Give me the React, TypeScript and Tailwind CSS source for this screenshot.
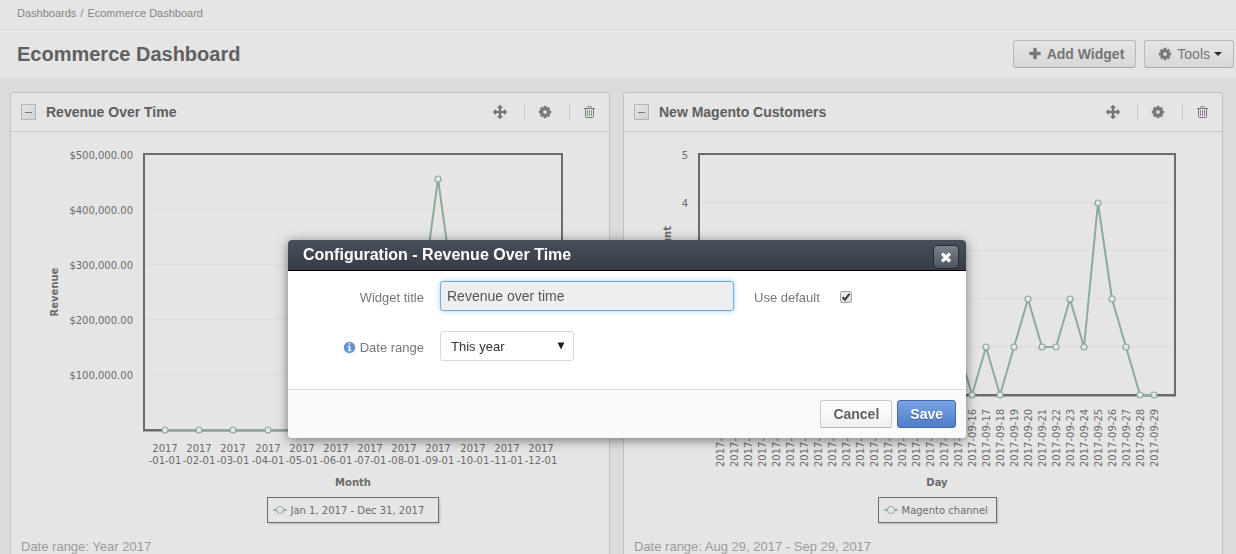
import React, { useState } from "react";

const ICONS = {
  plus: "M1600 736v192q0 40-28 68t-68 28h-416v416q0 40-28 68t-68 28h-192q-40 0-68-28t-28-68v-416h-416q-40 0-68-28t-28-68v-192q0-40 28-68t68-28h416v-416q0-40 28-68t68-28h192q40 0 68 28t28 68v416h416q40 0 68 28t28 68z",
  cog: "M1152 896q0-106-75-181t-181-75-181 75-75 181 75 181 181 75 181-75 75-181zm512-109v222q0 12-8 23t-20 13l-185 28q-19 54-39 91 35 50 107 138 10 12 10 25t-9 23q-27 37-99 108t-94 71q-12 0-26-9l-138-108q-44 23-91 38-16 136-29 186-7 28-36 28h-222q-14 0-24.5-8.5t-11.5-21.5l-28-184q-49-16-90-37l-141 107q-10 9-25 9-14 0-25-11-126-114-165-168-7-10-7-23 0-12 8-23 15-21 51-66.5t54-70.5q-27-50-41-99l-183-27q-13-2-21-12.5t-8-23.5v-222q0-12 8-23t19-13l186-28q14-46 39-92-40-57-107-138-10-12-10-24 0-10 9-23 26-36 98.5-107.5t94.5-71.5q13 0 26 10l138 107q44-23 91-38 16-136 29-186 7-28 36-28h222q14 0 24.5 8.5t11.5 21.5l28 184q49 16 90 37l142-107q9-9 24-9 13 0 25 10 129 119 165 170 7 8 7 22 0 12-8 23-15 21-51 66.5t-54 70.5q26 50 41 98l183 28q13 2 21 12.5t8 23.5z",
  move: "M1792 896q0 26-19 45l-256 256q-19 19-45 19t-45-19-19-45v-128h-384v384h128q26 0 45 19t19 45-19 45l-256 256q-19 19-45 19t-45-19l-256-256q-19-19-19-45t19-45 45-19h128v-384h-384v128q0 26-19 45t-45 19-45-19l-256-256q-19-19-19-45t19-45l256-256q19-19 45-19t45 19 19 45v128h384v-384h-128q-26 0-45-19t-19-45 19-45l256-256q19-19 45-19t45 19l256 256q19 19 19 45t-19 45-45 19h-128v384h384v-128q0-26 19-45t45-19 45 19l256 256q19 19 19 45z",
  times: "M1490 1322q0 40-28 68l-136 136q-28 28-68 28t-68-28l-294-294-294 294q-28 28-68 28t-68-28l-136-136q-28-28-28-68t28-68l294-294-294-294q-28-28-28-68t28-68l136-136q28-28 68-28t68 28l294 294 294-294q28-28 68-28t68 28l136 136q28 28 28 68t-28 68l-294 294 294 294q28 28 28 68z",
  info: "M1152 1376v-160q0-14-9-23t-23-9h-96v-512q0-14-9-23t-23-9h-320q-14 0-23 9t-9 23v160q0 14 9 23t23 9h96v320h-96q-14 0-23 9t-9 23v160q0 14 9 23t23 9h448q14 0 23-9t9-23zm-128-896v-160q0-14-9-23t-23-9h-192q-14 0-23 9t-9 23v160q0 14 9 23t23 9h192q14 0 23-9t9-23zm640 416q0 209-103 385.5t-279.5 279.5-385.5 103-385.5-103-279.5-279.5-103-385.5 103-385.5 279.5-279.5 385.5-103 385.5 103 279.5 279.5 103 385.5z",
};

function Icon({ name, className = "size-3.5" }: { name: keyof typeof ICONS; className?: string }) {
  return (
    <svg viewBox="0 0 1792 1792" className={className} fill="currentColor" stroke="currentColor" strokeWidth="50" aria-hidden="true" overflow="visible">
      <path d={ICONS[name]} />
    </svg>
  );
}

function TrashIcon({ bars }: { bars: string }) {
  return (
    <svg viewBox="0 0 14 14" className="size-3.5" fill="none" aria-hidden="true">
      <path d="M3.500 3.500v8q0 1 1 1h6q1 0 1-1V3.500" stroke="currentColor" />
      <path d="M2 3.500h11M5.500 3.200V2.500q0-1 1-1h2q1 0 1 1v.7" stroke="currentColor" />
      <path d="M5.500 5v6M7.500 5v6M9.500 5v6" stroke={bars} />
    </svg>
  );
}

type Tick = { at: number; label: string };
type Point = [number, number];

type ChartProps = {
  title: string;
  left: number;
  bottom: number;
  yTicks: Tick[];
  yTitle: string;
  yTitleX: number;
  points: Point[];
  xLabels: React.ReactNode;
  xTitle: string;
  legend: string;
  legendWidth: number;
};

function LineChart(p: ChartProps) {
  const right = 551;
  const mid = (p.left + right) / 2;
  const yMid = (22 + p.bottom) / 2;
  const legendX = Math.round(mid - p.legendWidth / 2) + 0.5;
  return (
    <svg viewBox="0 0 598 394" className="block h-auto w-full" role="img" aria-label={p.title} fontFamily='"DejaVu Sans", Verdana, sans-serif' fontSize="10" fill="#6b6b6b">
      {p.yTicks.map((t) => (
        <g key={t.label}>
          <line x1={p.left} x2={right} y1={t.at} y2={t.at} stroke="#dddddd" />
          <text x={p.left - 11} y={t.at + 4.5} textAnchor="end">{t.label}</text>
        </g>
      ))}
      <line x1={p.left - 1} x2={right + 1} y1={p.bottom + 1.5} y2={p.bottom + 1.5} stroke="#a8a8a8" />
      <rect x={p.left} y="22" width={right - p.left} height={p.bottom - 22} fill="none" stroke="#6b6b6b" strokeWidth="2" />
      <polyline points={p.points.map((q) => q.join(",")).join(" ")} fill="none" stroke="#8cab9a" strokeWidth="2" strokeLinejoin="round" />
      {p.points.map(([x, y]) => (
        <circle key={x} cx={x} cy={y} r="3" fill="#e5e5e5" stroke="#8cab9a" strokeWidth="1.2" />
      ))}
      {p.xLabels}
      <text transform={`translate(${p.yTitleX} ${yMid}) rotate(-90)`} textAnchor="middle" fontWeight="bold">{p.yTitle}</text>
      <text x={mid} y="354" textAnchor="middle" fontWeight="bold">{p.xTitle}</text>
      <rect x={legendX + 1} y="366.5" width={p.legendWidth} height="26" fill="#c9c9c9" />
      <rect x={legendX} y="365.5" width={p.legendWidth - 1} height="25" fill="#e5e5e5" stroke="#6b6b6b" />
      <line x1={legendX + 6} x2={legendX + 19} y1="378" y2="378" stroke="#8cab9a" strokeWidth="2" />
      <circle cx={legendX + 12.5} cy="378" r="3.5" fill="#e5e5e5" stroke="#9dbaaa" strokeWidth="1.2" />
      <text x={legendX + 23} y="382">{p.legend}</text>
    </svg>
  );
}

const months = ["01", "02", "03", "04", "05", "06", "07", "08", "09", "10", "11", "12"];
const monthX = (i: number) => Math.round(154 + i * 34.18);
const revenuePoints: Point[] = months.map((_, i) => [monthX(i), i === 8 ? 47 : 298]);

const days = Array.from({ length: 32 }, (_, i) => (i < 3 ? `2017-08-${29 + i}` : `2017-09-${String(i - 2).padStart(2, "0")}`));
const customers = [0, 1, 0, 0, 1, 0, 1, 1, 0, 0, 1, 0, 0, 1, 0, 1, 0, 1, 0, 1, 0, 1, 2, 1, 1, 2, 1, 4, 2, 1, 0, 0];
const dayX = (i: number) => 96 + i * 14;
const customerPoints: Point[] = customers.map((v, i) => [dayX(i), 263 - v * 48]);

const divider = "h-4 w-px bg-[#cbcbcb]";

function Widget({ title, range, trashBars, children }: { title: string; range: string; trashBars: string; children: React.ReactNode }) {
  return (
    <section className="rounded-[3px] border border-[#c2c2c2] bg-[#e5e5e5] pb-4">
      <header className="flex h-[39px] items-center border-b border-[#c8c8c8] px-2.5 text-[#767676]">
        <button type="button" aria-label={`Collapse ${title}`} className="flex h-4 w-[15px] items-center justify-center border border-[#b5b5b5] bg-linear-to-br from-[#e5e5e5] to-[#d2d2d2]">
          <span className="h-px w-[7px] bg-[#767676]" />
        </button>
        <h2 className="ml-2.5 grow text-sm font-bold text-[#5e5e5e]">{title}</h2>
        <div className="flex items-center">
          <button type="button" aria-label={`Move ${title}`}><Icon name="move" /></button>
          <span className={`${divider} mr-[13px] ml-[17px]`} />
          <button type="button" aria-label={`Configure ${title}`}><Icon name="cog" /></button>
          <span className={`${divider} mr-3 ml-[17px]`} />
          <button type="button" aria-label={`Delete ${title}`} className="mr-[3px]"><TrashIcon bars={trashBars} /></button>
        </div>
      </header>
      {children}
      <p className="mt-[13px] px-2.5 text-[13px] leading-4 text-[#9b9b9b]">Date range: {range}</p>
    </section>
  );
}

const greyButton = "flex h-7 items-center rounded-[3px] border border-[#b9b9b9] border-b-[#a9a9a9] bg-linear-to-b from-[#e5e5e5] to-[#d8d8d8] text-sm text-[#767676]";

function ConfigDialog() {
  const [title, setTitle] = useState("Revenue over time");
  const [useDefault, setUseDefault] = useState(true);
  const label = "text-[13px] leading-[33px] text-[#777777]";
  return (
    <div className="fixed inset-0 flex items-start justify-center pt-60 pl-[18px]">
      <div role="dialog" aria-modal="true" aria-labelledby="dialog-title" className="w-[678px] max-w-full overflow-hidden rounded-[4px] bg-white shadow-[0_2px_12px_rgba(0,0,0,0.5)]">
        <header className="flex h-[31px] items-center justify-between border-b border-black bg-linear-to-b from-[#474f5b] to-[#363d45] pr-[7px] pl-[15px]">
          <h2 id="dialog-title" className="text-base leading-7 font-bold text-white">Configuration - Revenue Over Time</h2>
          <button type="button" aria-label="Close" className="mt-1 flex h-6 w-[26px] items-center justify-center rounded-[4px] border border-[#272d35] bg-linear-to-b from-[#7b838d] to-[#4b535e] text-white">
            <Icon name="times" />
          </button>
        </header>
        <form id="widget-form" className="flex flex-col gap-[17px] pt-2.5 pb-[25px]" onSubmit={(e) => e.preventDefault()}>
          <div className="flex items-start">
            <label htmlFor="widget-title" className={`${label} mr-4 w-[136px] text-right`}>Widget title</label>
            <input
              id="widget-title"
              value={title}
              onChange={(e) => setTitle(e.target.value)}
              className="h-[30px] w-[294px] rounded-[3px] border border-[#66afe9] bg-[#eeeeee] px-1.5 text-sm text-[#555555] shadow-[0_0_5px_rgba(102,175,233,0.6)] outline-none"
            />
            <label htmlFor="use-default" className={`${label} mx-5`}>Use default</label>
            <span className="mt-2.5 grid size-3">
              <input
                id="use-default"
                type="checkbox"
                checked={useDefault}
                onChange={(e) => setUseDefault(e.target.checked)}
                className="peer col-start-1 row-start-1 size-3 appearance-none rounded-[2px] border border-[#a3a3a3] bg-linear-to-b from-[#eeeeee] to-[#dcdcdc]"
              />
              <svg viewBox="0 0 12 12" className="pointer-events-none invisible col-start-1 row-start-1 size-3 peer-checked:visible" aria-hidden="true">
                <path d="M2.600 6.300l2.300 2.400L9.500 2.900" fill="none" stroke="#3f3f3f" strokeWidth="2.2" />
              </svg>
            </span>
          </div>
          <div className="flex items-start">
            <label htmlFor="date-range" className={`${label} mr-4 flex w-[136px] items-center justify-end gap-1`}>
              <Icon name="info" className="size-[13px] text-[#628fd3]" />
              Date range
            </label>
            <span className="grid w-[134px] items-center">
              <select id="date-range" defaultValue="This year" className="col-start-1 row-start-1 h-[30px] appearance-none self-start rounded-[3px] border border-[#d9d9d9] bg-white px-2.5 pt-px text-[13px] text-[#333333]">
                <option>This year</option>
              </select>
              <svg viewBox="0 0 8 8" className="pointer-events-none col-start-1 row-start-1 mt-[11px] mr-[9px] size-2 self-start justify-self-end" aria-hidden="true">
                <path d="M.500 .500h7L4 7.500z" fill="#222222" />
              </svg>
            </span>
          </div>
        </form>
        <footer className="flex justify-end gap-[5px] border-t border-[#dddddd] bg-[#fafafa] p-2.5">
          <button type="button" className="h-7 rounded-[3px] border border-[#c8c8c8] border-b-[#b5b5b5] bg-linear-to-b from-white to-[#f0f0f0] px-3 text-sm font-bold text-[#606060]">Cancel</button>
          <button type="submit" form="widget-form" className="h-7 rounded-[3px] border border-[#4268a8] bg-linear-to-b from-[#7ba3e4] to-[#4f7cc9] px-3 text-sm font-bold text-white text-shadow-[0_1px_1px_rgba(0,0,0,0.35)]">Save</button>
        </footer>
      </div>
    </div>
  );
}

export default function App() {
  return (
    <div className="h-screen overflow-hidden bg-[#dbdbdb] font-['Liberation_Sans',Arial,sans-serif]">
      <nav aria-label="Breadcrumb" className="flex h-[30px] items-center gap-1 border-b border-[#dadada] bg-[#e5e5e5] px-[17px] pb-0.5 text-[11px] text-[#858585]">
        <a href="#dashboards">Dashboards</a>
        <span>/</span>
        <a href="#ecommerce">Ecommerce Dashboard</a>
      </nav>
      <div className="flex h-12 items-center justify-between bg-[#e5e5e5] pr-0.5 pl-[17px]">
        <h1 className="text-xl font-bold text-[#606060]">Ecommerce Dashboard</h1>
        <div className="flex gap-2">
          <button type="button" className={`${greyButton} gap-[5px] pr-[11px] pl-3.5 font-bold`}>
            <Icon name="plus" />
            Add Widget
          </button>
          <button type="button" className={`${greyButton} gap-[5px] pr-[11px] pl-[13px]`}>
            <Icon name="cog" />
            <span className="flex items-center gap-1">
              Tools
              <span className="border-x-4 border-t-4 border-x-transparent border-t-[#2a2a2a]" />
            </span>
          </button>
        </div>
      </div>
      <main className="grid grid-cols-2 items-start gap-[13px] pt-3.5 pr-[13px] pl-2.5">
        <Widget title="Revenue Over Time" range="Year 2017" trashBars="#7ba07c">
          <LineChart
            title="Revenue by month"
            left={133}
            bottom={298}
            yTicks={[5, 4, 3, 2, 1].map((n, i) => ({ at: 22.5 + i * 55, label: `$${n}00,000.00` }))}
            yTitle="Revenue"
            yTitleX={47}
            points={revenuePoints}
            xLabels={months.map((m, i) => (
              <text key={m} textAnchor="middle">
                <tspan x={monthX(i)} y="320">2017</tspan>
                <tspan x={monthX(i)} y="332">{`-${m}-01`}</tspan>
              </text>
            ))}
            xTitle="Month"
            legend="Jan 1, 2017 - Dec 31, 2017"
            legendWidth={172}
          />
        </Widget>
        <Widget title="New Magento Customers" range="Aug 29, 2017 - Sep 29, 2017" trashBars="#a07ba6">
          <LineChart
            title="New customers by day"
            left={75}
            bottom={263}
            yTicks={[5, 4, 3, 2, 1].map((n, i) => ({ at: 22.5 + i * 48, label: String(n) }))}
            yTitle="Customers Count"
            yTitleX={47}
            points={customerPoints}
            xLabels={days.map((d, i) => (
              <text key={d} transform={`translate(${dayX(i) + 4} 335) rotate(-90)`}>{d}</text>
            ))}
            xTitle="Day"
            legend="Magento channel"
            legendWidth={119}
          />
        </Widget>
      </main>
      <ConfigDialog />
    </div>
  );
}
